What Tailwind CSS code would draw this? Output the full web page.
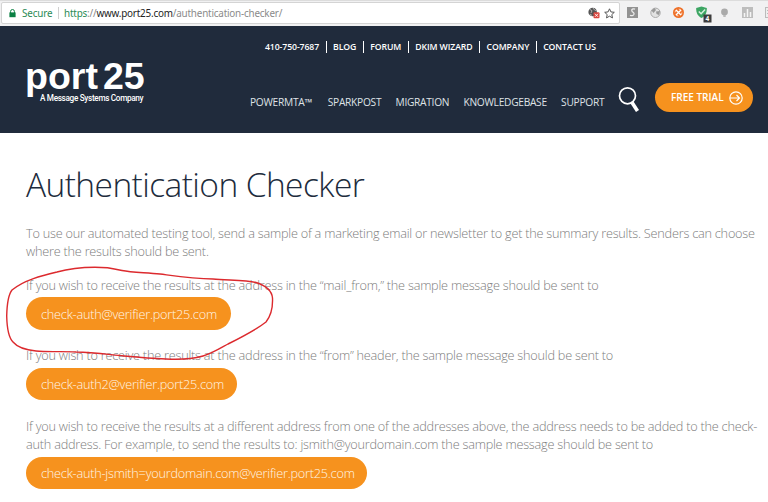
<!DOCTYPE html>
<html lang="en">
<head>
<meta charset="utf-8">
<title>Authentication Checker</title>
<script src="https://cdn.jsdelivr.net/npm/@tailwindcss/browser@4"></script>
</head>
<body class="w-[768px] h-[502px] overflow-hidden bg-white relative font-['Open_Sans',sans-serif]">
<div class="h-[26px] bg-[#f1f1f2] border-t border-[#dcdcdc] flex items-start pt-px">
  <div class="ml-px w-[619px] h-[22px] shrink-0 bg-white border border-[#d4d4d4] rounded-xs flex items-center text-[9.9px] whitespace-nowrap font-['Noto_Sans',sans-serif]">
    <svg class="ml-[7px] w-[7px] h-[9px] shrink-0" viewBox="0 0 7 9"><path d="M1.6 4V2.4a1.9 1.9 0 0 1 3.8 0V4" fill="none" stroke="#0b8043" stroke-width="1"/><rect x=".4" y="3.4" width="6.2" height="4.8" fill="#0b8043"/></svg>
    <span class="ml-[6px] text-[#2a8a55] w-[31px] tracking-[-0.15px]">Secure</span>
    <span class="ml-[5px] w-px h-[12px] bg-[#cfcfcf]"></span>
    <span class="ml-[5px] text-[#8a8a8a] tracking-[-0.2px]"><span class="text-[#2a8a55]">https</span>://<span class="text-[#222]">www.port25.com</span>/authentication-checker/</span>
    <svg class="ml-auto w-[12px] h-[12px]" viewBox="0 0 12 12"><circle cx="4.7" cy="5" r="4.3" fill="#555"/><path d="M2 2.5l2 1.2L3 6M5 1l1.5 2L9 4M2 7l2 1.5" fill="none" stroke="#bbb" stroke-width=".9"/><rect x="5.5" y="5.3" width="6" height="6" rx="1" fill="#d9463e"/><path d="M7 6.8l3 3m0-3l-3 3" stroke="#fff" stroke-width=".9"/></svg>
    <svg class="ml-[4px] mr-[4px] w-[11px] h-[11px]" viewBox="0 0 11 11"><path d="M5.5.8l1.4 3.1 3.4.4-2.5 2.3.7 3.3-3-1.7-3 1.7.7-3.3L.7 4.3l3.4-.4z" fill="none" stroke="#555" stroke-width="1"/></svg>
  </div>
  <div class="w-[148px] shrink-0 h-[22px] overflow-hidden">
    <svg class="w-[148px] h-[22px]" viewBox="620 2 148 22">
      <rect x="627" y="7" width="11" height="11" fill="#929292"/><path d="M635 9.200c-2-1-4 .2-3 2 .8 1.400 2.500 1 2 3-.5 1.800-2.500 1.800-4 1" fill="none" stroke="#eee" stroke-width="1.300"/>
      <circle cx="655.500" cy="12.800" r="4.700" fill="#e2e2e2" stroke="#aaa"/><path d="M651.500 10.500l3-2.500 1.500 2-2.500 3zM656 11.500l4-.5-1 4-2.500-1z" fill="#999"/>
      <circle cx="678.500" cy="12.500" r="5.500" fill="#ee7028"/><path d="M676 10l5 5m0-5l-5 5" stroke="#fff" stroke-width="1.400"/><circle cx="678.500" cy="12.500" r="3.400" fill="none" stroke="#fff" stroke-width=".7" stroke-dasharray="3 2.300"/>
      <path d="M701.500 6.500l5.300 1.500c.2 5-1.500 8-5.300 10-3.800-2-5.500-5-5.300-10z" fill="#3ca563"/><path d="M698.800 11.500l2.300 2.300 4-4.200" fill="none" stroke="#d5f0dc" stroke-width="1.500"/>
      <rect x="703.500" y="14.500" width="8" height="8" fill="#3d3d3d"/><text x="705.500" y="21" font-size="6.500" font-weight="700" fill="#fff">4</text>
      <circle cx="724.500" cy="12" r="3.400" fill="#aaa"/><rect x="723.300" y="15" width="2.400" height="2" fill="#bbb"/>
      <rect x="742" y="7" width="11" height="11" fill="#bdbdbd"/><path d="M744.500 17v-4M747.500 17v-8M750.500 17v-5" stroke="#f5f5f5" stroke-width="1.500"/>
      <rect x="765.500" y="7.500" width="9" height="10" fill="#eee" stroke="#bbb"/><path d="M767 10.500h1M767 13.500h1" stroke="#bbb"/>
    </svg>
  </div>
</div>
<header class="h-[107px] bg-[#202b3c] flex text-white">
  <div class="ml-[24px] mt-[30px] w-[121px]">
    <div class="h-[37px] pl-px flex gap-[5px] text-[37.500px] leading-[40px] font-bold font-['Liberation_Sans',sans-serif]"><span>port</span><span>25</span></div>
    <div class="ml-[16px] text-[8.200px] leading-[10px] font-medium font-['Roboto',sans-serif] whitespace-nowrap tracking-[-0.32px]">A Message Systems Company</div>
  </div>
  <div class="ml-[105px] w-[356px]">
    <nav class="ml-[15px] mt-[13px] h-[15px] flex items-center text-[8.700px] font-semibold whitespace-nowrap gap-[6.500px] tracking-[-0.1px]">
      <span class="pt-[2px]">410-750-7687</span><i class="w-px h-[12px] bg-white"></i><span class="pt-[2px]">BLOG</span><i class="w-px h-[12px] bg-white"></i><span class="pt-[2px]">FORUM</span><i class="w-px h-[12px] bg-white"></i><span class="pt-[2px]">DKIM WIZARD</span><i class="w-px h-[12px] bg-white"></i><span class="pt-[2px]">COMPANY</span><i class="w-px h-[12px] bg-white"></i><span class="pt-[2px]">CONTACT US</span>
    </nav>
    <nav class="mt-[40px] flex items-center text-[10.200px] leading-[16px] gap-[14.300px] whitespace-nowrap text-[#dfe2e6] tracking-[-0.28px]">
      <span class="w-[63.500px]">POWERMTA<span class="font-bold">™</span></span><span>SPARKPOST</span><span>MIGRATION</span><span>KNOWLEDGEBASE</span><span>SUPPORT</span>
    </nav>
  </div>
  <svg class="ml-[12px] mt-[60px] w-[22px] h-[27px]" viewBox="0 0 22 27"><circle cx="9.500" cy="9.800" r="8" fill="none" stroke="#fff" stroke-width="1.700"/><path d="M14 16.500l5.500 8.500" stroke="#fff" stroke-width="3.600"/></svg>
  <div class="ml-[15px] mt-[57px] w-[98px] h-[29px] rounded-full bg-[#f6921e] flex items-center pl-[16px] text-[10px] font-semibold whitespace-nowrap"><span class="w-[58px]">FREE TRIAL</span><svg class="w-[14px] h-[14px]" viewBox="0 0 14 14" fill="none" stroke="#fff" stroke-width="1.200"><circle cx="7" cy="7" r="6.200"/><path d="M1 7h9M7.500 4l3 3-3 3"/></svg></div>
</header>
<main class="pl-[26px] text-[12.700px] leading-[18px] tracking-[-0.22px] text-[#7d7d7d] font-light whitespace-nowrap">
  <h1 class="mt-[29px] h-[44px] leading-[44px] text-[33.500px] tracking-[-0.58px] text-[#202b3c]">Authentication Checker</h1>
  <p class="mt-[18px]">To use our automated testing tool, send a sample of a marketing email or newsletter to get the summary results. Senders can choose<br>where the results should be sent.</p>
  <p class="mt-[16px]">If you wish to receive the results at the address in the “mail_from,” the sample message should be sent to</p>
  <a class="mt-[3px] flex items-center w-[205px] h-[33px] rounded-full bg-[#f6921e] pl-[15px] text-[#fff6e8]">check-auth@verifier.port25.com</a>
  <p class="mt-[16px]">If you wish to receive the results at the address in the “from” header, the sample message should be sent to</p>
  <a class="mt-[4px] flex items-center w-[211px] h-[32px] rounded-full bg-[#f6921e] pl-[15px] text-[#fff6e8]">check-auth2@verifier.port25.com</a>
  <p class="mt-[17px]">If you wish to receive the results at a different address from one of the addresses above, the address needs to be added to the check-<br>auth address. For example, to send the results to: jsmith@yourdomain.com the sample message should be sent to</p>
  <a class="mt-[4px] flex items-center w-[341px] h-[32px] rounded-full bg-[#f6921e] pl-[15px] text-[#fff6e8]">check-auth-jsmith=yourdomain.com@verifier.port25.com</a>
</main>
<svg class="absolute left-0 top-[260px] w-[300px] h-[110px]" viewBox="0 0 300 110" fill="none" stroke="#dc2a2e" stroke-width="1.400" stroke-linecap="round" stroke-linejoin="round"><path d="M107.500 7.700C88 6.500 72 7.800 57 12C42 15.500 24 20 12 30C8 35 7 44 6.700 56C7 69 9 78 13 82C18 88 26 90 36 91C48 92.300 62 91 76 92C93 92.300 108 94.500 124 96C140 97.500 152 98.500 166 99C180 99.800 194 98.500 203 96C212 93.500 219 89 228 84C242 77 256 70 266 62C270 57 273 49 272.500 38C272 32 267 26 256 22.500C245 19.500 226 20.500 213 19C193 18.500 176 16 160 14C146 12.500 132 12.500 122 10.500Q114 9 107.500 7.700"/></svg>
</body>
</html>
